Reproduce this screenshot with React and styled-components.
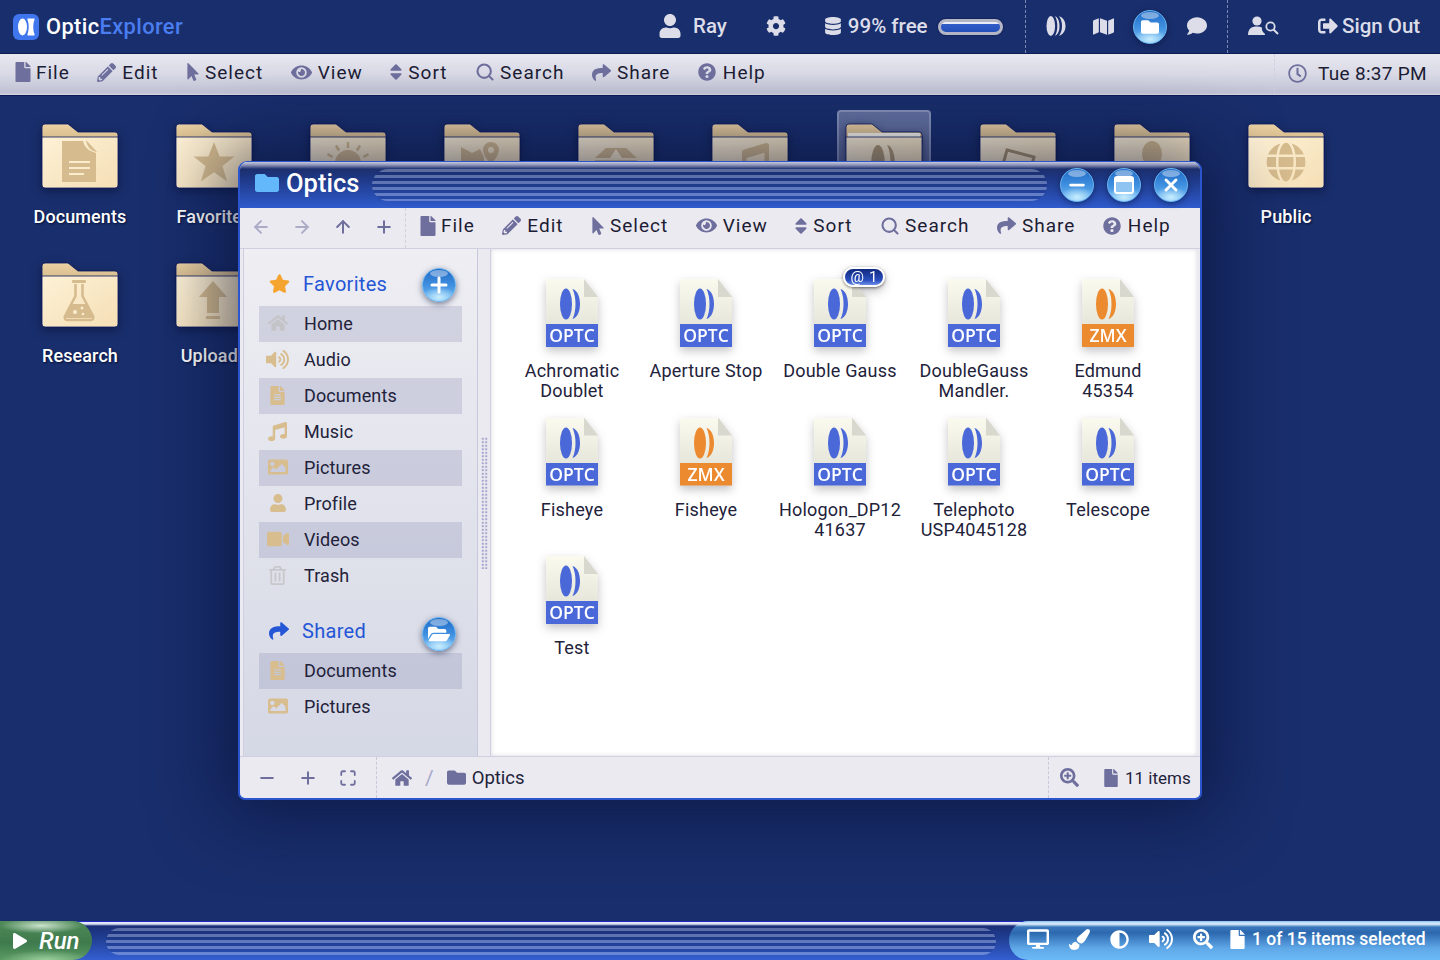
import React from 'react';
import styled, { createGlobalStyle } from 'styled-components';
import {
  FaFile, FaPencilAlt, FaMousePointer, FaEye, FaSort, FaShare, FaQuestionCircle,
  FaRegClock, FaUser, FaCog, FaDatabase, FaMap, FaFolder, FaComment, FaSignOutAlt, FaHome,
  FaVolumeUp, FaFileAlt, FaMusic, FaImage, FaVideo, FaRegTrashAlt, FaStar, FaFolderOpen,
  FaPlay, FaDesktop, FaPaintBrush, FaAdjust, FaSearchPlus, FaGlobe,
} from 'react-icons/fa';
import { FiArrowLeft, FiArrowRight, FiArrowUp, FiPlus, FiMinus, FiMaximize, FiX, FiSearch } from 'react-icons/fi';

const GlobalStyle = createGlobalStyle`
  html, body { margin: 0; padding: 0; background: #192e6c; }
  body { font-family: Roboto, "Liberation Sans", sans-serif; overflow: hidden; }
`;

const Page = styled.div`
  width: 1440px;
  height: 960px;
  display: flex;
  flex-direction: column;
  overflow: hidden;
  background: #192e6c;
`;

/* top bar */
const TopBar = styled.header`
  height: 53px;
  flex: none;
  display: flex;
  align-items: stretch;
  justify-content: space-between;
  color: #e2e3ee;
`;
const Brand = styled.div`
  display: flex;
  align-items: center;
  gap: 7px;
  padding-left: 13px;
  font-size: 21.8px;
  font-weight: 500;
  color: #fff;
  letter-spacing: 0.4px;
  span { color: #4a7df0; }
`;
const TopGroups = styled.div`
  display: flex;
  align-items: stretch;
`;
const TopGroup = styled.div`
  display: flex;
  align-items: center;
  width: ${(p) => p.$width}px;
  box-sizing: border-box;
  padding-left: ${(p) => p.$pad}px;
  border-left: ${(p) => (p.$dashed ? '1px dashed #7c88b0' : 'none')};
`;
const TopItem = styled.div`
  display: flex;
  align-items: center;
  gap: ${(p) => p.$gap || 6}px;
  margin-left: ${(p) => p.$ml || 0}px;
  padding-bottom: 1px;
  font-size: 20.5px;
  font-weight: 500;
  color: #dcdde9;
`;
const Gauge = styled.div`
  width: 65px;
  height: 16px;
  margin-left: 10px;
  box-sizing: border-box;
  border-radius: 8px;
  border: 3px solid #b4b6c6;
  background: linear-gradient(180deg, #e8ecf8 0 2px, #2f5cc8 2px, #2350b8 100%);
  box-shadow: 0 0 2px #0a1440;
`;
const Orb = styled.div`
  width: ${(p) => p.$size}px;
  height: ${(p) => p.$size}px;
  flex: none;
  position: relative;
  border-radius: 50%;
  display: flex;
  align-items: center;
  justify-content: center;
  color: #fff;
  margin-left: ${(p) => p.$ml || 0}px;
  background:
    radial-gradient(ellipse 55% 32% at 50% 88%, rgba(205, 240, 255, 0.95), rgba(160, 220, 255, 0) 100%),
    linear-gradient(180deg, #1f6ac4 0%, #3f8fe0 50%, #76bff5 100%);
  border: 1px solid #69b4f0;
  box-sizing: border-box;
  box-shadow: 0 2px 6px rgba(8, 20, 60, 0.55);
  &::before {
    content: '';
    position: absolute;
    top: 1px;
    left: 22%;
    right: 22%;
    height: 22%;
    border-radius: 50%;
    background: rgba(255, 255, 255, 0.4);
  }
  svg { position: relative; }
`;

/* menus */
const MenuBar = styled.nav`
  height: 41px;
  flex: none;
  display: flex;
  align-items: center;
  justify-content: space-between;
  border-top: 1px solid #0d1a58;
  border-bottom: 1px solid #0d1a58;
  background: linear-gradient(180deg, #e8e8f1 0%, #d8d9e5 50%, #bfc1d4 95%, #d7d8e2 100%);
`;
const MenuList = styled.div`
  display: flex;
  align-items: center;
  gap: 27.5px;
  padding-left: ${(p) => p.$pad || 0}px;
  padding-bottom: 5px;
`;
const MenuEntry = styled.div`
  display: flex;
  align-items: center;
  font-size: 19px;
  letter-spacing: 1px;
  color: #1c1c34;
`;
const MenuIcon = styled.span`
  width: ${(p) => p.$slot}px;
  flex: none;
  box-sizing: border-box;
  padding-right: 6px;
  display: flex;
  justify-content: center;
  color: #6f6f9e;
  svg { flex: none; }
`;
const Clock = styled.div`
  align-self: stretch;
  width: 166px;
  box-sizing: border-box;
  display: flex;
  align-items: center;
  gap: 11px;
  padding: 0 0 3px 13px;
  font-size: 19px;
  letter-spacing: 0.3px;
  color: #1c1c34;
  border-left: 1px dashed #cfd0de;
  svg { color: #6f6f9e; }
`;

/* desktop */
const Desktop = styled.main`
  flex: 1;
  position: relative;
  background: #192e6c;
`;
const DesktopGrid = styled.div`
  display: grid;
  grid-template-columns: repeat(10, 134px);
  grid-auto-rows: 139px;
  padding: 14px 0 0 13px;
`;
const DesktopIcon = styled.div`
  position: relative;
  display: flex;
  flex-direction: column;
  align-items: center;
  padding-top: 13px;
  height: 125px;
  box-sizing: border-box;
  &::before {
    content: '';
    display: ${(p) => (p.$selected ? 'block' : 'none')};
    position: absolute;
    top: 0;
    left: 20px;
    width: 94px;
    height: 96px;
    box-sizing: border-box;
    border-radius: 4px;
    background: rgba(190, 195, 225, 0.45);
    border: 2px solid rgba(190, 195, 225, 0.4);
  }
`;
const FolderArt = styled.svg`
  position: relative;
  width: 78px;
  height: 66px;
  filter: drop-shadow(0 3px 5px rgba(6, 14, 50, 0.55));
`;
const DesktopLabel = styled.div`
  margin-top: 17px;
  font-size: 18px;
  font-weight: 500;
  letter-spacing: 0.1px;
  color: #fff;
  text-shadow: 1px 1px 2px #05103a;
  white-space: nowrap;
`;

/* window */
const Window = styled.section`
  position: absolute;
  left: 238px;
  top: 65px;
  width: 964px;
  height: 639px;
  box-sizing: border-box;
  display: flex;
  flex-direction: column;
  overflow: hidden;
  border-radius: 9px 9px 7px 7px;
  border: 2px solid #2a55cc;
  border-top-width: 1px;
  background: #eceaf1;
  box-shadow: 0 0 70px 14px rgba(7, 15, 50, 0.62);
`;
const TitleBar = styled.div`
  height: 46px;
  flex: none;
  display: flex;
  align-items: center;
  padding: 0 12px 0 15px;
  background: linear-gradient(180deg, #c5c9dc 0, #8d93b8 3px, #1c2f6e 7px, #1f3a8a 40%, #2f5bcc 100%);
  color: #fff;
`;
const WindowTitle = styled.div`
  display: flex;
  align-items: center;
  gap: 7px;
  width: 117px;
  padding-bottom: 5px;
  font-size: 25.5px;
  font-weight: 500;
  svg { color: #62b8fa; }
`;
const Stripes = styled.div`
  height: ${(p) => p.$h}px;
  border-radius: ${(p) => p.$h / 2}px;
  background: repeating-linear-gradient(
    180deg,
    rgba(215, 225, 250, 0.34) 0 3px,
    rgba(20, 40, 110, 0.22) 3px 6px
  );
`;
const TitleStripes = styled(Stripes)`
  flex: 1;
`;
const WindowButtons = styled.div`
  display: flex;
  gap: 13px;
  margin-left: 13px;
`;
const WinToolbar = styled.div`
  height: 40px;
  flex: none;
  display: flex;
  align-items: center;
  border-bottom: 1px solid #cfcfe0;
`;
const NavButtons = styled.div`
  display: flex;
  align-items: center;
  gap: 21px;
  width: 166px;
  padding: 0 0 2px 11px;
  box-sizing: border-box;
  align-self: stretch;
  border-right: 1px dashed #cfcfdc;
  color: #6f6f9e;
`;
const NavButton = styled.span`
  display: flex;
  opacity: ${(p) => (p.$off ? 0.5 : 1)};
`;
const WinBody = styled.div`
  flex: 1;
  min-height: 0;
  display: flex;
  padding: 0 3px;
`;
const Sidebar = styled.aside`
  width: 235px;
  flex: none;
  box-sizing: border-box;
  padding: 16px 15px 0 15px;
  background: linear-gradient(180deg, #eeeef3 0%, #d5d8e5 100%);
  border-left: 1px solid #cfcfe0;
  border-right: 1px solid #c8c8dc;
`;
const SideHead = styled.div`
  position: relative;
  height: 41px;
  box-sizing: border-box;
  padding: 0 0 4px 10px;
  display: flex;
  align-items: center;
  gap: 13px;
  font-size: 20px;
  letter-spacing: 0.3px;
  color: #2456d6;
  svg { flex: none; }
`;
const SideHeadOrb = styled.div`
  position: absolute;
  right: 6px;
  top: ${(p) => p.$top}px;
`;
const SideList = styled.div`
  margin-bottom: 18px;
`;
const SideRow = styled.div`
  height: 36px;
  box-sizing: border-box;
  padding-bottom: 2px;
  display: flex;
  align-items: center;
  font-size: 18px;
  letter-spacing: 0.1px;
  color: #22223a;
  background: ${(p) => (p.$odd ? 'rgba(125, 128, 170, 0.24)' : 'transparent')};
`;
const SideIcon = styled.span`
  width: 45px;
  flex: none;
  display: flex;
  justify-content: center;
  padding-right: 8px;
  box-sizing: border-box;
  color: ${(p) => p.$color || '#d8bd8e'};
`;
const Splitter = styled.div`
  width: 12px;
  flex: none;
  display: flex;
  align-items: center;
  justify-content: center;
  &::after {
    content: '';
    width: 7px;
    height: 132px;
    background-image: radial-gradient(circle, #a4a4cc 1.3px, transparent 1.4px);
    background-size: 3.5px 3.5px;
  }
`;
const FileArea = styled.div`
  flex: 1;
  min-width: 0;
  background: #fff;
  padding: 30px 0 0 14px;
  display: grid;
  grid-template-columns: repeat(5, 134px);
  grid-auto-rows: 138.5px;
  border-left: 1px solid #cfcfe0;
  box-sizing: border-box;
  box-shadow: inset 0 0 4px rgba(120, 120, 150, 0.3);
`;
const FileCell = styled.div`
  display: flex;
  flex-direction: column;
  align-items: center;
`;
const FileArt = styled.div`
  position: relative;
  width: 52px;
  height: 68px;
  filter: drop-shadow(0 4px 5px rgba(60, 60, 70, 0.3));
`;
const Paper = styled.div`
  width: 100%;
  height: 100%;
  display: flex;
  flex-direction: column;
  align-items: center;
  justify-content: space-between;
  clip-path: polygon(0 0, 73% 0, 100% 27%, 100% 100%, 0 100%);
  background: linear-gradient(180deg, #fafaee 0%, #dcdcd2 100%);
`;
const Fold = styled.div`
  position: absolute;
  top: 0;
  right: 0;
  width: 14px;
  height: 18px;
  clip-path: polygon(0 0, 100% 100%, 0 100%);
  background: #d8d8cf;
`;
const LensArt = styled.svg`
  width: 24px;
  height: 32px;
  margin: 9px 0 0 -5px;
  color: ${(p) => p.$color};
`;
const Band = styled.div`
  width: 100%;
  height: 23px;
  line-height: 23px;
  text-align: center;
  font-family: "Open Sans", sans-serif;
  font-size: 17.5px;
  font-weight: 600;
  color: #fff;
  background: ${(p) => p.$color};
`;
const LinkBadge = styled.div`
  position: absolute;
  top: -12px;
  left: 29px;
  width: 42px;
  height: 20px;
  box-sizing: border-box;
  border: 2px solid #fff;
  border-radius: 10px;
  display: flex;
  align-items: center;
  justify-content: center;
  gap: 5px;
  font-size: 15px;
  line-height: 1;
  color: #fff;
  background: linear-gradient(180deg, #10297f 0%, #2a4fbe 70%, #6e8fe8 100%);
  box-shadow: 0 1px 3px rgba(0, 0, 0, 0.5);
`;
const FileLabel = styled.div`
  width: 130px;
  margin-top: 14px;
  text-align: center;
  font-size: 18px;
  line-height: 20px;
  letter-spacing: 0.2px;
  color: #22223a;
  white-space: pre-line;
`;
const StatusBar = styled.footer`
  height: 41px;
  flex: none;
  display: flex;
  align-items: center;
  border-top: 1px solid #d0d0e0;
  color: #6f6f9e;
`;
const StatusZoom = styled.div`
  width: 137px;
  box-sizing: border-box;
  align-self: stretch;
  display: flex;
  align-items: center;
  gap: 21px;
  padding-left: 17px;
  border-right: 1px dashed #c8c8d8;
`;
const Crumbs = styled.div`
  flex: 1;
  display: flex;
  align-items: center;
  padding-left: 15px;
  font-size: 18.5px;
  color: #22223a;
  svg { color: #6f6f9e; flex: none; }
`;
const CrumbSep = styled.span`
  margin: 0 13px;
  color: #a9a9c8;
  font-size: 21px;
`;
const CrumbName = styled.span`
  margin-left: 6px;
`;
const StatusInfo = styled.div`
  width: 152px;
  flex: none;
  box-sizing: border-box;
  align-self: stretch;
  display: flex;
  align-items: center;
  padding-left: 11px;
  font-size: 17px;
  color: #22223a;
  border-left: 1px dashed #c8c8d8;
  white-space: nowrap;
  svg { color: #6f6f9e; flex: none; }
`;
const ItemCount = styled.span`
  display: flex;
  align-items: center;
  gap: 5px;
  margin-left: 23px;
`;

/* bottom bar */
const BottomBar = styled.footer`
  height: 39px;
  flex: none;
  display: flex;
  align-items: stretch;
  background: linear-gradient(180deg, #e4e8fa 0, #dfe3f8 2px, #1b2f78 4px, #1f3c90 40%, #3560d2 100%);
  border-top: 1px solid #1d2bc0;
  box-sizing: border-box;
`;
const RunButton = styled.div`
  width: 92px;
  flex: none;
  display: flex;
  align-items: center;
  gap: 11px;
  padding-left: 12px;
  box-sizing: border-box;
  border-radius: 0 20px 20px 0;
  margin-top: -1px;
  font-size: 24px;
  font-style: italic;
  font-weight: 500;
  color: #fff;
  background:
    radial-gradient(ellipse 45% 20% at 45% 12%, rgba(235, 250, 235, 0.8), rgba(235, 250, 235, 0) 100%),
    radial-gradient(ellipse 50% 25% at 50% 100%, rgba(170, 220, 170, 0.8), rgba(170, 220, 170, 0) 100%),
    linear-gradient(180deg, #4f8a58 0%, #3e7a4c 55%, #5b9a64 100%);
`;
const BottomStripes = styled(Stripes)`
  width: 890px;
  flex: none;
  margin: 6px 0 0 14px;
`;
const Tray = styled.div`
  margin-left: auto;
  width: 431px;
  flex: none;
  box-sizing: border-box;
  margin-top: -1px;
  display: flex;
  align-items: center;
  gap: 20px;
  padding: 0 0 3px 18px;
  border-radius: 20px 0 0 20px;
  color: #fff;
  font-size: 17.5px;
  font-weight: 500;
  background: linear-gradient(180deg, #8cc4f4 0, #e0f0fd 3px, #3a78bc 6px, #2c68ae 30%, #5fa8e8 70%, #6cbaf8 100%);
`;
const TrayCount = styled.span`
  display: flex;
  align-items: center;
  gap: 5px;
  margin-left: -5px;
  white-space: nowrap;
`;

const Logo = () => (
  <svg width="26" height="26" viewBox="0 0 26 26">
    <rect width="26" height="26" rx="6" fill="#3f76ee" />
    <ellipse cx="9.5" cy="13" rx="4.5" ry="8.5" fill="#fff" />
    <path d="M14.5 4.5h7v1.6c-1.6 3-1.6 10.8 0 13.800v1.6h-7v-1.6c1.6-3 1.6-10.8 0-13.800z" fill="#fff" />
  </svg>
);

const LensStack = () => (
  <svg width="20" height="22" viewBox="0 0 20 22" fill="currentColor">
    <ellipse cx="4.800" cy="11" rx="4.300" ry="10" />
    <path d="M8 1.300c3 .8 4.500 5 4.500 9.700s-1.500 8.900-4.500 9.700c1.600-2.600 2.300-6.100 2.300-9.700s-.7-7.100-2.300-9.700z" transform="translate(1 0)" />
    <path d="M13 1.300c4 .8 6.500 5 6.500 9.700s-2.500 8.900-6.500 9.700c2-2.600 3-6.100 3-9.700s-1-7.100-3-9.700z" />
  </svg>
);

const UserSearch = () => (
  <svg width="31" height="20" viewBox="0 0 31 20" fill="currentColor">
    <circle cx="9" cy="5" r="4.600" />
    <path d="M0 19c0-6 3-8.500 9-8.500 2 0 3.600.3 4.900.9-.4 2.500.8 5 3 6.300v1.300z" />
    <circle cx="22.500" cy="10.500" r="4.200" fill="none" stroke="currentColor" strokeWidth="1.800" />
    <path d="M25.500 13.500l4.500 4.500" stroke="currentColor" strokeWidth="2" />
  </svg>
);

const Folder = ({ glyph, open }) => (
  <FolderArt viewBox="0 0 78 66">
    <defs>
      <linearGradient id="folderBack" x1="0" y1="0" x2="0" y2="1">
        <stop offset="0" stopColor="#ecd3a4" />
        <stop offset="1" stopColor="#cfb384" />
      </linearGradient>
      <linearGradient id="folderFront" x1="0" y1="0" x2="1" y2="1">
        <stop offset="0" stopColor="#fdf1d6" />
        <stop offset="1" stopColor="#f5dfb5" />
      </linearGradient>
    </defs>
    <path d="M1 4a3 3 0 0 1 3-3h23l10 8h37a3 3 0 0 1 3 3v10H1z" fill="url(#folderBack)" stroke="#0a1660" strokeWidth="0.8" />
    {open && <rect x="3" y="10" width="72" height="6" fill="#fbf8ef" />}
    <path d="M1 14h76v48a3 3 0 0 1-3 3H4a3 3 0 0 1-3-3z" fill="url(#folderFront)" stroke="#0a1660" strokeWidth="0.8" />
    <g color="#d5bb8d" fill="#d5bb8d">{glyph}</g>
  </FolderArt>
);

const DocGlyph = () => (
  <>
    <path d="M21 18h21c1 5 5 10 13 12v29H21z" />
    <path d="M45 17l11 12c-6-1-10-5-11-12z" />
    <rect x="28" y="38" width="21" height="2" fill="#fbeccd" />
    <rect x="28" y="44" width="21" height="2" fill="#fbeccd" />
    <rect x="28" y="50" width="15" height="2" fill="#fbeccd" />
  </>
);
const StarGlyph = () => <path d="M39 19l5.600 14.500h14.900l-12 9.500 4.600 15.500L39 49.300l-13.100 9.200 4.600-15.500-12-9.500h14.900z" />;
const SunGlyph = () => (
  <>
    <circle cx="39" cy="40" r="13" />
    <path d="M39 19v6M27 22.500l3 5M51 22.500l-3 5M18.500 31l5 3M59.500 31l-5 3M16 42h6M56 42h6" stroke="#d5bb8d" strokeWidth="2.500" fill="none" />
  </>
);
const MapGlyph = () => (
  <>
    <path d="M18 24l11 6 8-4 4 8v18l-12-4-11 4z" />
    <path d="M48 19a8 8 0 0 0-8 8c0 6 8 14 8 14s8-8 8-14a8 8 0 0 0-8-8zm0 5a3 3 0 1 1 0 6 3 3 0 0 1 0-6z" />
  </>
);
const PeakGlyph = () => (
  <>
    <path d="M29 25h20l11 10H18z" />
    <path d="M39 26l-6 9h12z" fill="#fbeccd" />
    <rect x="18" y="37" width="42" height="2" />
    <path d="M22 41h34l-5 12H27z" />
  </>
);
const OpticGlyph = () => (
  <g fill="#b09a72">
    <ellipse cx="33" cy="42" rx="7" ry="20" />
    <path d="M42 22c6 1 8 11 8 20s-2 19-8 20c3-5 3.500-13 3.500-20S45 27 42 22z" />
  </g>
);
const PictureGlyph = () => <path d="M28 27l27 7-7 25-27-7z" fill="none" stroke="#a8926c" strokeWidth="3" />;
const PersonGlyph = () => (
  <>
    <ellipse cx="39" cy="31" rx="10" ry="13" />
    <path d="M21 60c0-10 8-15 18-15s18 5 18 15z" />
  </>
);
const FlaskGlyph = () => (
  <>
    <rect x="31" y="18" width="14" height="3" rx="1" />
    <path d="M34.500 22v12L24 54a2.600 2.600 0 0 0 2.500 4h23a2.600 2.600 0 0 0 2.500-4L41.500 34V22" fill="none" stroke="#d5bb8d" strokeWidth="2.500" />
    <path d="M31 42h14l7 14H24z" />
    <circle cx="34" cy="50" r="2" fill="#fbeccd" />
    <circle cx="41" cy="46" r="1.500" fill="#fbeccd" />
    <circle cx="42" cy="52" r="1.300" fill="#fbeccd" />
  </>
);
const UploadGlyph = () => (
  <>
    <path d="M38 19l14 16h-8v16H32V35h-8z" />
    <rect x="31" y="54" width="14" height="3" />
  </>
);

const desktopFolders = [
  { id: 'documents', name: 'Documents', glyph: <DocGlyph /> },
  { id: 'favorites', name: 'Favorites', glyph: <StarGlyph /> },
  { id: 'sun', glyph: <SunGlyph /> },
  { id: 'map', glyph: <MapGlyph /> },
  { id: 'peak', glyph: <PeakGlyph /> },
  { id: 'music', glyph: <FaMusic x="22" y="20" size="36" /> },
  { id: 'optics', glyph: <OpticGlyph />, selected: true },
  { id: 'picture', glyph: <PictureGlyph /> },
  { id: 'person', glyph: <PersonGlyph /> },
  { id: 'public', name: 'Public', glyph: <FaGlobe x="19" y="19" size="40" /> },
  { id: 'research', name: 'Research', glyph: <FlaskGlyph /> },
  { id: 'uploads', name: 'Uploads', glyph: <UploadGlyph /> },
];

const menuItems = [
  { icon: <FaFile size={20} />, label: 'File', slot: 20 },
  { icon: <FaPencilAlt size={19} />, label: 'Edit', slot: 25 },
  { icon: <FaMousePointer size={18} />, label: 'Select', slot: 19 },
  { icon: <FaEye size={21} />, label: 'View', slot: 27 },
  { icon: <FaSort size={20} />, label: 'Sort', slot: 18 },
  { icon: <FiSearch size={20} strokeWidth={2.5} />, label: 'Search', slot: 25 },
  { icon: <FaShare size={19} />, label: 'Share', slot: 25 },
  { icon: <FaQuestionCircle size={18} />, label: 'Help', slot: 25 },
];

const favorites = [
  { icon: <FaHome size={20} />, label: 'Home', color: '#c4c4c8' },
  { icon: <FaVolumeUp size={23} />, label: 'Audio' },
  { icon: <FaFileAlt size={19} />, label: 'Documents' },
  { icon: <FaMusic size={19} />, label: 'Music' },
  { icon: <FaImage size={20} />, label: 'Pictures' },
  { icon: <FaUser size={18} />, label: 'Profile' },
  { icon: <FaVideo size={22} />, label: 'Videos' },
  { icon: <FaRegTrashAlt size={19} />, label: 'Trash', color: '#c8c8cc' },
];

const shared = [
  { icon: <FaFileAlt size={19} />, label: 'Documents' },
  { icon: <FaImage size={20} />, label: 'Pictures' },
];

const files = [
  { name: 'Achromatic\nDoublet', ext: 'OPTC' },
  { name: 'Aperture Stop', ext: 'OPTC' },
  { name: 'Double Gauss', ext: 'OPTC', linked: true },
  { name: 'DoubleGauss\nMandler.', ext: 'OPTC' },
  { name: 'Edmund\n45354', ext: 'ZMX' },
  { name: 'Fisheye', ext: 'OPTC' },
  { name: 'Fisheye', ext: 'ZMX' },
  { name: 'Hologon_DP12\n41637', ext: 'OPTC' },
  { name: 'Telephoto\nUSP4045128', ext: 'OPTC' },
  { name: 'Telescope', ext: 'OPTC' },
  { name: 'Test', ext: 'OPTC' },
];

const extColors = { OPTC: '#4a68d8', ZMX: '#ec8a30' };

function Menu({ pad }) {
  return (
    <MenuList $pad={pad}>
      {menuItems.map((item) => (
        <MenuEntry key={item.label}>
          <MenuIcon $slot={item.slot}>{item.icon}</MenuIcon>
          {item.label}
        </MenuEntry>
      ))}
    </MenuList>
  );
}

function FileItem({ file }) {
  const color = extColors[file.ext];
  return (
    <FileCell>
      <FileArt>
        <Paper>
          <LensArt $color={color} viewBox="0 0 24 32" fill="currentColor">
            <ellipse cx="8" cy="16" rx="6" ry="15.500" />
            <path d="M14.500 1c5.500 1.500 7.500 9 7.500 15s-2 13.500-7.500 15c2-4 3-9.500 3-15s-1-11-3-15z" />
          </LensArt>
          <Band $color={color}>{file.ext}</Band>
        </Paper>
        <Fold />
        {file.linked && (
          <LinkBadge>
            <span>@</span>
            <span>1</span>
          </LinkBadge>
        )}
      </FileArt>
      <FileLabel>{file.name}</FileLabel>
    </FileCell>
  );
}

function SideSection({ icon, title, orb, orbTop, items }) {
  return (
    <>
      <SideHead>
        {icon}
        {title}
        <SideHeadOrb $top={orbTop}>
          <Orb $size={34}>{orb}</Orb>
        </SideHeadOrb>
      </SideHead>
      <SideList>
        {items.map((item, i) => (
          <SideRow key={item.label} $odd={i % 2 === 0}>
            <SideIcon $color={item.color}>{item.icon}</SideIcon>
            {item.label}
          </SideRow>
        ))}
      </SideList>
    </>
  );
}

export default function App() {
  return (
    <Page>
      <GlobalStyle />
      <TopBar>
        <Brand>
          <Logo />
          <div>
            Optic<span>Explorer</span>
          </div>
        </Brand>
        <TopGroups>
          <TopGroup $width={367} $pad={0}>
            <TopItem $gap={11}>
              <FaUser size={24} />
              Ray
            </TopItem>
            <TopItem $ml={39}>
              <FaCog size={20} />
            </TopItem>
            <TopItem $ml={38}>
              <FaDatabase size={18} />
              99% free
            </TopItem>
            <Gauge />
          </TopGroup>
          <TopGroup $width={202} $pad={20} $dashed>
            <TopItem>
              <LensStack />
            </TopItem>
            <TopItem $ml={27}>
              <FaMap size={21} />
            </TopItem>
            <Orb $size={34} $ml={19}>
              <FaFolder size={18} />
            </Orb>
            <TopItem $ml={20}>
              <FaComment size={20} />
            </TopItem>
          </TopGroup>
          <TopGroup $width={213} $pad={20} $dashed>
            <TopItem>
              <UserSearch />
            </TopItem>
            <TopItem $ml={39} $gap={4}>
              <FaSignOutAlt size={20} />
              Sign Out
            </TopItem>
          </TopGroup>
        </TopGroups>
      </TopBar>

      <MenuBar>
        <Menu pad={16} />
        <Clock>
          <FaRegClock size={19} />
          Tue 8:37 PM
        </Clock>
      </MenuBar>

      <Desktop>
        <DesktopGrid>
          {desktopFolders.map((folder) => (
            <DesktopIcon key={folder.id} $selected={folder.selected}>
              <Folder glyph={folder.glyph} open={folder.selected} />
              {folder.name && <DesktopLabel>{folder.name}</DesktopLabel>}
            </DesktopIcon>
          ))}
        </DesktopGrid>

        <Window>
          <TitleBar>
            <WindowTitle>
              <FaFolder size={24} />
              Optics
            </WindowTitle>
            <TitleStripes $h={32} />
            <WindowButtons>
              <Orb $size={34}>
                <FiMinus size={22} strokeWidth={3} />
              </Orb>
              <Orb $size={34}>
                <svg width="20" height="18" viewBox="0 0 20 18">
                  <rect x="1" y="1" width="18" height="16" rx="2" fill="#8ec4f2" stroke="#fff" strokeWidth="2" />
                  <rect x="1" y="1" width="18" height="5" fill="#fff" />
                </svg>
              </Orb>
              <Orb $size={34}>
                <FiX size={20} strokeWidth={3.4} />
              </Orb>
            </WindowButtons>
          </TitleBar>

          <WinToolbar>
            <NavButtons>
              <NavButton $off><FiArrowLeft size={20} strokeWidth={2.4} /></NavButton>
              <NavButton $off><FiArrowRight size={20} strokeWidth={2.4} /></NavButton>
              <NavButton><FiArrowUp size={20} strokeWidth={2.4} /></NavButton>
              <NavButton><FiPlus size={20} strokeWidth={2.4} /></NavButton>
            </NavButtons>
            <Menu pad={15} />
          </WinToolbar>

          <WinBody>
            <Sidebar>
              <SideSection
                icon={<FaStar size={21} color="#f5a430" />}
                title="Favorites"
                orbTop={3}
                orb={<FiPlus size={24} strokeWidth={3} />}
                items={favorites}
              />
              <SideSection
                icon={<FaShare size={20} color="#2456d6" />}
                title="Shared"
                orbTop={5}
                orb={<FaFolderOpen size={22} />}
                items={shared}
              />
            </Sidebar>
            <Splitter />
            <FileArea>
              {files.map((file) => (
                <FileItem key={file.name + file.ext} file={file} />
              ))}
            </FileArea>
          </WinBody>

          <StatusBar>
            <StatusZoom>
              <FiMinus size={20} strokeWidth={2.4} />
              <FiPlus size={20} strokeWidth={2.4} />
              <FiMaximize size={18} strokeWidth={2.4} />
            </StatusZoom>
            <Crumbs>
              <FaHome size={20} />
              <CrumbSep>/</CrumbSep>
              <FaFolder size={19} />
              <CrumbName>Optics</CrumbName>
            </Crumbs>
            <StatusInfo>
              <FaSearchPlus size={19} />
              <ItemCount>
                <FaFile size={18} />
                11 items
              </ItemCount>
            </StatusInfo>
          </StatusBar>
        </Window>
      </Desktop>

      <BottomBar>
        <RunButton>
          <FaPlay size={16} />
          Run
        </RunButton>
        <BottomStripes $h={27} />
        <Tray>
          <FaDesktop size={22} />
          <FaPaintBrush size={21} />
          <FaAdjust size={19} />
          <FaVolumeUp size={24} />
          <FaSearchPlus size={20} />
          <TrayCount>
            <FaFile size={19} />
            1 of 15 items selected
          </TrayCount>
        </Tray>
      </BottomBar>
    </Page>
  );
}
